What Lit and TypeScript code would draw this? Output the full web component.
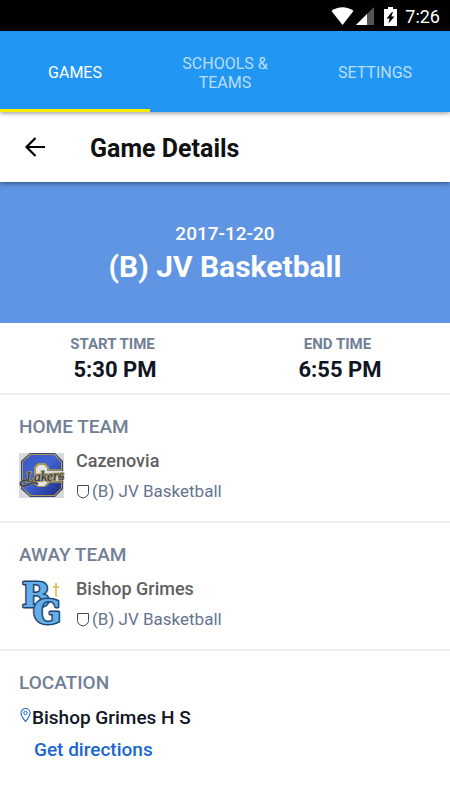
import { LitElement, html, css, svg } from "lit";
import { customElement, property, state } from "lit/decorators.js";
import { classMap } from "lit/directives/class-map.js";

const shieldIcon = html`<svg class="shield" viewBox="0 0 14 15" width="14" height="15" aria-hidden="true">
  <path d="M1.500 1.500H12.500V8.500C12.500 11.500 10.500 13 7 14C3.500 13 1.500 11.500 1.500 8.500Z" fill="none" stroke="#3f4652" stroke-width="1" stroke-linejoin="round"/>
</svg>`;

const cazenoviaLogo = svg`
  <defs>
    <linearGradient id="blue" x1="0" y1="0" x2="1" y2="1">
      <stop offset="0" stop-color="#3b58c4"/><stop offset=".45" stop-color="#4263d2"/><stop offset="1" stop-color="#1c2c86"/>
    </linearGradient>
  </defs>
  <rect width="45" height="45" fill="#d9dade"/>
  <polygon points="11,0 36,0 44,8 44,36 36,44 11,44 2,36 2,8" fill="#3a4270"/>
  <polygon points="11,1 36,1 43,9 43,35 36,43 11,43 3,35 3,9" fill="#a79a55"/>
  <polygon points="12,2 35,2 42,9 42,35 35,42 12,42 4,35 4,9" fill="url(#blue)"/>
  <polygon points="19,10 26,10 30,14 30,31 26,34 19,34 15,31 15,14" fill="#a79a55"/>
  <polygon points="20,12 25,12 28,15 28,30 25,33 20,33 17,30 17,15" fill="#e4e5ea"/>
  <rect x="28" y="18" width="17" height="10" fill="#d9dade"/>
  <path d="M29 17H43M29 29H43" stroke="#a79a55" stroke-width="1.500"/>
  <text x="7" y="28" transform="rotate(-3 22 26)" font-family="Liberation Serif, serif" font-style="italic" font-weight="400" font-size="14" fill="#252e5c" stroke="#a3965a" stroke-width="2" paint-order="stroke">Lakers</text>
  <path d="M9 27C-1 27 0 34 6 33C12 31 14 28 19 31M39 24L45 24" fill="none" stroke="#8d8252" stroke-width="2.400"/>
  <path d="M9 27C-1 27 0 34 6 33C12 31 14 28 19 31M39 24L45 24" fill="none" stroke="#252e5c" stroke-width="1.200"/>
`;

const grimesLogo = svg`
  <g font-family="DejaVu Serif, serif" font-weight="700" fill="#64aee8" stroke="#1f4672" stroke-linejoin="round" paint-order="stroke">
    <text x="3" y="26" font-size="33" stroke-width="3">B</text>
    <text x="14" y="43" font-size="33" stroke-width="3">G</text>
  </g>
  <path d="M37 2V16M34 6H40" stroke="#e3b548" stroke-width="1.500"/>
`;

@customElement("team-section")
class TeamSection extends LitElement {
  @property() heading = "";
  @property() school = "";
  @property() team = "";
  @property({ attribute: false }) logo: unknown;

  static styles = css`
    :host { display: block; border-bottom: 2px solid #edf0f5; padding: 20px 19px 18px; }
    h2 { margin: 0; font-size: 19px; line-height: 24px; font-weight: 500; color: #718096; }
    .row { display: flex; gap: 12px; padding-top: 10px; }
    .logo { flex: none; margin-top: 4px; overflow: visible; }
    .name { margin: 0; font-size: 18px; line-height: 24px; font-weight: 500; color: #5f5f5f; }
    .team { display: flex; align-items: center; gap: 2px; margin: 6px 0 0; font-size: 17px; line-height: 24px; color: #64748f; }
    .shield { flex: none; }
  `;

  render() {
    return html`
      <h2>${this.heading}</h2>
      <div class="row">
        <svg class="logo" viewBox="0 0 45 45" width="45" height="45" role="img" aria-label="${this.school} logo">${this.logo}</svg>
        <div>
          <p class="name">${this.school}</p>
          <p class="team">${shieldIcon}<span>${this.team}</span></p>
        </div>
      </div>
    `;
  }
}

@customElement("app-root")
class AppRoot extends LitElement {
  @state() private tab = 0;
  private tabs = ["GAMES", "SCHOOLS & TEAMS", "SETTINGS"];

  static styles = css`
    :host { display: block; min-height: 100vh; background: #fff; font-family: Roboto, "Liberation Sans", sans-serif; color: #10151f; }
    button { font: inherit; border: 0; background: none; padding: 0; cursor: pointer; }
    .status { display: flex; align-items: center; justify-content: flex-end; height: 31px; padding: 1px 10px 0 0; box-sizing: border-box; background: #000; color: #fff; font-size: 18px; }
    .wifi { margin-right: 2px; }
    .signal { margin-right: 10px; }
    .battery { margin-right: 8px; }
    .tabs { position: relative; z-index: 2; display: grid; grid-template-columns: repeat(3, 1fr); background: #2196f3; box-shadow: 0 1px 5px rgba(0, 0, 0, 0.45); }
    .tab { min-height: 81px; padding: 5px 28px 0; border-bottom: 3px solid transparent; font-size: 16px; line-height: 19px; color: rgba(255, 255, 255, 0.7); }
    .tab.active { color: #fff; border-bottom-color: #ffeb00; }
    .bar { position: relative; z-index: 1; display: flex; align-items: center; gap: 42px; height: 70px; padding-left: 22px; background: #fff; box-shadow: 0 1px 5px rgba(0, 0, 0, 0.5); }
    .back { display: flex; color: #000; }
    .bar h1 { margin: 0; padding-top: 3px; font-size: 25px; line-height: 32px; font-weight: 700; color: #111; }
    .hero { padding: 39px 16px 36px; background: #6095e3; color: #fff; text-align: center; font-weight: 500; }
    .date { margin: 0; font-size: 19px; line-height: 26px; }
    .hero h2 { margin: 0; font-size: 30px; line-height: 40px; font-weight: 700; }
    .times { display: grid; grid-template-columns: 1fr 1fr; margin: 0; padding: 9px 0; border-bottom: 2px solid #edf0f5; text-align: center; font-weight: 700; }
    dt { font-size: 15px; line-height: 24px; color: #718096; }
    dd { margin: 0; padding-left: 5px; font-size: 22px; line-height: 28px; }
    .location { padding: 20px 19px; font-size: 19px; font-weight: 500; line-height: 24px; }
    .location h2 { margin: 0; font-size: 19px; line-height: 24px; font-weight: 500; color: #718096; }
    .place { display: flex; margin: 11px 0 8px; }
    .pin { margin-top: 1px; }
    .directions { margin-left: 15px; color: #1967d2; text-decoration: none; }
  `;

  render() {
    return html`
      <div class="status">
        <svg class="wifi" width="23" height="18" viewBox="0 0 23 18" aria-hidden="true"><path d="M0.5 4C7 -.9 16 -.9 22.500 4L11.500 18Z" fill="#fff"/></svg>
        <svg class="signal" width="18" height="18" viewBox="0 0 18 18" aria-hidden="true"><path d="M18 0V18H0Z" fill="#555"/><path d="M11 7V18H0Z" fill="#fff"/></svg>
        <svg class="battery" width="13" height="19" viewBox="0 0 13 19" aria-hidden="true"><path d="M4 0H9V2H13V19H0V2H4Z" fill="#fff"/><path d="M8 5L2.500 11.500H5.500L4.500 16.500L10.500 9.500H7.300L9 5Z" fill="#000"/></svg>
        <span>7:26</span>
      </div>
      <nav class="tabs">
        ${this.tabs.map(
          (label, i) => html`<button class=${classMap({ tab: true, active: i === this.tab })} @click=${() => (this.tab = i)}>${label}</button>`
        )}
      </nav>
      <header class="bar">
        <button class="back" aria-label="Back">
          <svg width="26" height="26" viewBox="0 0 26 26" aria-hidden="true"><path d="M23 13H5M13.500 4L4.500 13L13.500 22" fill="none" stroke="#000" stroke-width="2.200"/></svg>
        </button>
        <h1>Game Details</h1>
      </header>
      <main>
        <section class="hero">
          <p class="date">2017-12-20</p>
          <h2>(B) JV Basketball</h2>
        </section>
        <dl class="times">
          <div><dt>START TIME</dt><dd>5:30 PM</dd></div>
          <div><dt>END TIME</dt><dd>6:55 PM</dd></div>
        </dl>
        <team-section heading="HOME TEAM" school="Cazenovia" team="(B) JV Basketball" .logo=${cazenoviaLogo}></team-section>
        <team-section heading="AWAY TEAM" school="Bishop Grimes" team="(B) JV Basketball" .logo=${grimesLogo}></team-section>
        <section class="location">
          <h2>LOCATION</h2>
          <p class="place">
            <svg class="pin" width="13" height="16" viewBox="0 0 13 16" aria-hidden="true"><path d="M6.500 14.500C4.500 12 2 9.200 2 6A4.500 4.500 0 0 1 11 6C11 9.200 8.500 12 6.500 14.500Z" fill="none" stroke="#1967d2" stroke-width="1.100"/><circle cx="6.500" cy="6" r="1.700" fill="none" stroke="#1967d2"/></svg>
            <span>Bishop Grimes H S</span>
          </p>
          <a class="directions" href="#directions">Get directions</a>
        </section>
      </main>
    `;
  }
}
